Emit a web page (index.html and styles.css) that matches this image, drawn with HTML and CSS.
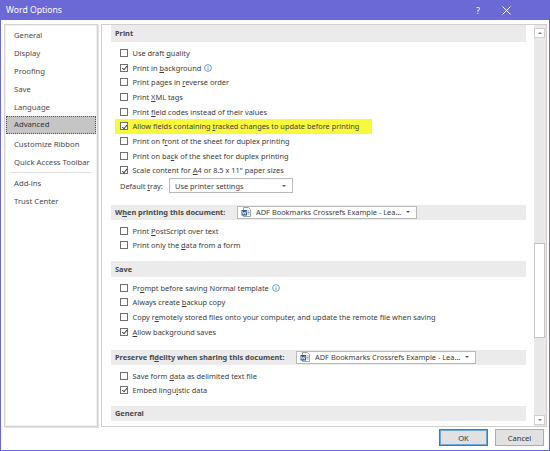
FILE: index.html
```html
<!DOCTYPE html>
<html>
<head>
<meta charset="utf-8">
<title>Word Options</title>
<link rel="stylesheet" href="styles.css">
</head>
<body>
<div class="window">
  <div class="titlebar">
    <span class="title">Word Options</span>
    <span class="tb-help">?</span>
    <svg class="tb-close" width="9" height="9" viewBox="0 0 9 9"><path d="M0.5 0.5 L8.5 8.5 M8.5 0.5 L0.5 8.5" stroke="#fff" stroke-width="1" fill="none"/></svg>
  </div>
  <div class="body">
    <div class="sidebar">
      <div class="nav">General</div>
      <div class="nav">Display</div>
      <div class="nav">Proofing</div>
      <div class="nav">Save</div>
      <div class="nav">Language</div>
      <div class="nav active">Advanced</div>
      <div class="nav gap">Customize Ribbon</div>
      <div class="nav">Quick Access Toolbar</div>
      <div class="sep"></div>
      <div class="nav">Add-ins</div>
      <div class="nav">Trust Center</div>
    </div>
    <div class="main">
      <div class="content">
        <div class="band b-print">Print</div>
        <div class="rows r-first">
          <div class="row"><span class="cb"></span><span>Use draft <u>q</u>uality</span></div>
          <div class="row"><span class="cb on"></span><span>Print in <u>b</u>ackground</span><svg class="info" width="8" height="8" viewBox="0 0 8 8"><circle cx="4" cy="4" r="3.4" fill="none" stroke="#3a86d8" stroke-width="0.8"/><path d="M4 3.4 V6 M4 2 V2.7" stroke="#3a86d8" stroke-width="0.8"/></svg></div>
          <div class="row"><span class="cb"></span><span>Print pages in <u>r</u>everse order</span></div>
          <div class="row"><span class="cb"></span><span>Print <u>X</u>ML tags</span></div>
          <div class="row"><span class="cb"></span><span>Print <u>f</u>ield codes instead of their values</span></div>
          <div class="row hl"><span class="cb on"></span><span>Allow fields containing <u>t</u>racked changes to update before printing</span></div>
          <div class="row"><span class="cb"></span><span>Print on f<u>r</u>ont of the sheet for duplex printing</span></div>
          <div class="row"><span class="cb"></span><span>Print on ba<u>c</u>k of the sheet for duplex printing</span></div>
          <div class="row"><span class="cb on"></span><span>Scale content for <u>A</u>4 or 8.5 x 11" paper sizes</span></div>
        </div>
        <div class="tray">
          <span class="tray-label">Default <u>t</u>ray:</span>
          <div class="select s-tray"><span class="sel-text">Use printer settings</span><span class="arrow"></span></div>
        </div>
        <div class="band band-sel b-when">
          <span class="band-label">W<u>h</u>en printing this document:</span>
          <div class="select s-doc">
            <svg class="docicon" width="10" height="10" viewBox="0 0 10 10"><path d="M2.5 0.5 H7.5 L9.5 2.5 V9.5 H2.5 Z" fill="#fff" stroke="#8a8a8a" stroke-width="0.8"/><rect x="0.5" y="3" width="5.5" height="5.5" fill="#2b5797"/><path d="M1.3 4.2 L2.1 7.4 L3.2 5 L4.3 7.4 L5.1 4.2" stroke="#fff" stroke-width="0.7" fill="none"/><path d="M6.5 4 H8.5 M6.5 5.5 H8.5 M6.5 7 H8.5" stroke="#2b5797" stroke-width="0.6"/></svg>
            <span class="sel-text">ADF Bookmarks Crossrefs Example - Lea...</span><span class="arrow"></span>
          </div>
        </div>
        <div class="rows">
          <div class="row"><span class="cb"></span><span>Print <u>P</u>ostScript over text</span></div>
          <div class="row"><span class="cb"></span><span>Print only the <u>d</u>ata from a form</span></div>
        </div>
        <div class="band b-save">Save</div>
        <div class="rows">
          <div class="row"><span class="cb"></span><span>Pr<u>o</u>mpt before saving Normal template</span><svg class="info" width="8" height="8" viewBox="0 0 8 8"><circle cx="4" cy="4" r="3.4" fill="none" stroke="#3a86d8" stroke-width="0.8"/><path d="M4 3.4 V6 M4 2 V2.7" stroke="#3a86d8" stroke-width="0.8"/></svg></div>
          <div class="row"><span class="cb"></span><span>Always create <u>b</u>ackup copy</span></div>
          <div class="row"><span class="cb"></span><span>Copy r<u>e</u>motely stored files onto your computer, and update the remote file when saving</span></div>
          <div class="row"><span class="cb on"></span><span><u>A</u>llow background saves</span></div>
        </div>
        <div class="band band-sel b-pres">
          <span class="band-label">Preserve fi<u>d</u>elity when sharing this document:</span>
          <div class="select s-doc">
            <svg class="docicon" width="10" height="10" viewBox="0 0 10 10"><path d="M2.5 0.5 H7.5 L9.5 2.5 V9.5 H2.5 Z" fill="#fff" stroke="#8a8a8a" stroke-width="0.8"/><rect x="0.5" y="3" width="5.5" height="5.5" fill="#2b5797"/><path d="M1.3 4.2 L2.1 7.4 L3.2 5 L4.3 7.4 L5.1 4.2" stroke="#fff" stroke-width="0.7" fill="none"/><path d="M6.5 4 H8.5 M6.5 5.5 H8.5 M6.5 7 H8.5" stroke="#2b5797" stroke-width="0.6"/></svg>
            <span class="sel-text">ADF Bookmarks Crossrefs Example - Lea...</span><span class="arrow"></span>
          </div>
        </div>
        <div class="rows">
          <div class="row"><span class="cb"></span><span>Save form <u>d</u>ata as delimited text file</span></div>
          <div class="row"><span class="cb on"></span><span>Embed lingu<u>i</u>stic data</span></div>
        </div>
        <div class="band b-gen">General</div>
      </div>
      <div class="scrollbar">
        <div class="sb-btn"><span class="up"></span></div>
        <div class="sb-track">
          <div class="sb-thumb"></div>
        </div>
        <div class="sb-btn"><span class="down"></span></div>
      </div>
    </div>
  </div>
  <div class="footer">
    <button class="btn default">OK</button>
    <button class="btn">Cancel</button>
  </div>
</div>
</body>
</html>
```

FILE: styles.css
```css
* { box-sizing: border-box; }
html, body { margin: 0; padding: 0; background: #fff; }
body {
  width: 550px; height: 451px; overflow: hidden;
  font-family: "Noto Sans", "Open Sans", sans-serif;
  font-size: 7.4px; color: #3b3b3b;
}
u { text-decoration-thickness: 0.6px; text-underline-offset: 1px; }
.window {
  width: 550px; height: 451px;
  border: 1px solid #6b69d6; border-top: none;
  display: flex; flex-direction: column;
}
.titlebar {
  height: 20px; background: #6b69d6; color: #fff;
  display: flex; align-items: center;
  margin: 0 -1px; padding: 0 0 0 6px;
}
.title { font-size: 8.6px; flex: 1; }
.tb-help { font-size: 9px; margin-right: 22px; }
.tb-close { margin-right: 39px; }
.body {
  display: flex; gap: 3px;
  padding: 4px 2px 0 3px;
  height: 407px;
}
.sidebar {
  width: 94px; height: 403px;
  border: 1px solid #d2d2d2;
  box-shadow: inset 0 0 0 1px #f0f0f0, 1px 1px 0 #e4e4e4;
  padding: 1px 1px 0 1px;
  font-size: 7.7px; color: #4a4a4a;
}
.nav { height: 18px; line-height: 18px; padding-left: 8px; white-space: nowrap; }
.nav.active {
  background: #c5c5c5; color: #333;
  outline: 1px dotted #555; outline-offset: -1px;
  height: 17.5px; line-height: 17.5px;
}
.nav.gap { margin-top: 1px; }
.sep { height: 1px; background: #dcdcdc; margin: 1px 5px 1px 5px; }
.main {
  flex: 1; height: 403px;
  border: 1px solid #cfcfcf;
  display: flex;
  overflow: hidden;
}
.content { flex: 1; padding: 0 8px 0 9px; overflow: hidden; }
.band {
  background: #ebebeb; font-weight: 700; color: #474747;
  height: 16px; line-height: 16px; padding-left: 4px;
}
.b-print { height: 17px; line-height: 17px; margin-top: 0; }
.band-sel { display: flex; align-items: center; height: 15px; }
.b-when { margin-top: 11px; }
.b-save { margin-top: 8px; }
.b-pres { margin-top: 10.5px; }
.b-gen { margin-top: 8px; height: 15px; line-height: 15px; }
.band-label { white-space: nowrap; }
.b-when .band-label { width: 122px; }
.b-pres .band-label { width: 181px; }
.rows { display: flex; flex-direction: column; padding-top: 3.6px; }
.r-first { padding-top: 3.6px; }
.row {
  height: 14.7px; display: flex; align-items: center;
  padding-left: 9px; white-space: nowrap;
}
.row.hl { background: #f9f93c; width: 257px; margin-left: 4px; padding-left: 5px; }
.cb {
  width: 8px; height: 8px; flex: none;
  border: 1px solid #6e6e6e; background: #fff;
  margin-right: 4.5px; position: relative;
}
.cb.on::after {
  content: ""; position: absolute; left: 1.6px; top: 0.2px;
  width: 2.2px; height: 4.2px;
  border-right: 1px solid #444; border-bottom: 1px solid #444;
  transform: rotate(40deg);
}
.info { margin-left: 3px; }
.tray { display: flex; align-items: center; height: 16px; padding-left: 9px; }
.tray-label { width: 49px; }
.select {
  display: flex; align-items: center;
  border: 1px solid #b9b9b9; background: #fff;
  height: 15px; padding-left: 5px; font-weight: 400; color: #3b3b3b;
}
.s-tray { width: 124px; }
.s-doc { width: 180px; height: 13px; padding-left: 3px; }
.sel-text { flex: 1; white-space: nowrap; overflow: hidden; }
.docicon { margin-right: 5px; flex: none; }
.arrow {
  width: 0; height: 0; margin-right: 6px; flex: none;
  border-left: 2.5px solid transparent; border-right: 2.5px solid transparent;
  border-top: 2.5px solid #555;
}
.scrollbar {
  width: 12px; background: #e8e8e8; display: flex; flex-direction: column;
  padding: 3px 1px 1px 0;
}
.sb-btn {
  height: 10px; background: #fff; border: 1px solid #cfcfcf;
  display: flex; align-items: center; justify-content: center;
}
.up { width: 0; height: 0; border-left: 2.5px solid transparent; border-right: 2.5px solid transparent; border-bottom: 2.5px solid #777; }
.down { width: 0; height: 0; border-left: 2.5px solid transparent; border-right: 2.5px solid transparent; border-top: 2.5px solid #777; }
.sb-track { flex: 1; padding-top: 205px; }
.sb-thumb { height: 95px; background: #fff; border: 1px solid #c4c4c4; }
.footer {
  display: flex; justify-content: flex-end; gap: 7px;
  padding: 2px 5px 0 0;
}
.btn {
  width: 49px; height: 17px; font-family: inherit; font-size: 7.6px;
  background: #e1e1e1; border: 1px solid #adadad; color: #333; padding: 0;
}
.btn.default { border: 1px solid #3b7bbf; box-shadow: inset 0 0 0 1px #6fa6dc; }
```
